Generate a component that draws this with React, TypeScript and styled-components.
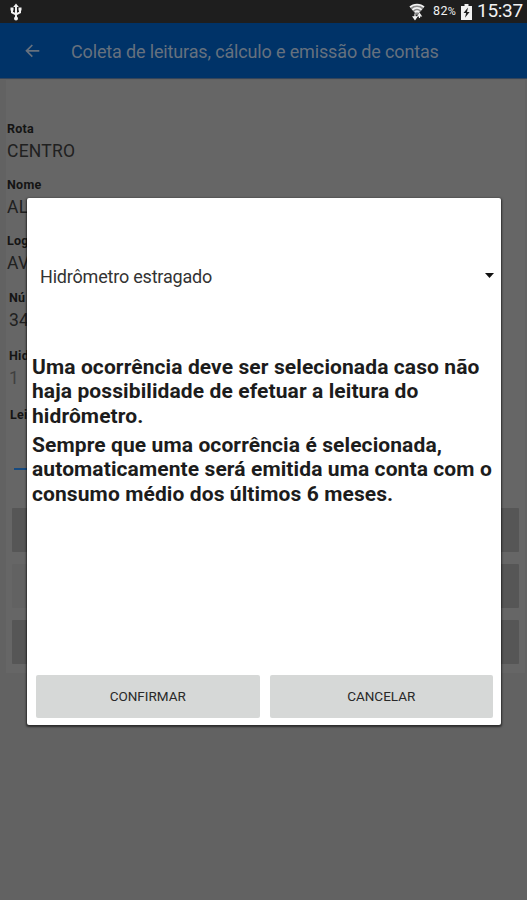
import React from "react";
import styled, { createGlobalStyle } from "styled-components";

const Global = createGlobalStyle`
  * { box-sizing: border-box; }
  body { margin: 0; background: #626262; font-family: Roboto, sans-serif; overflow: hidden; }
  button { font-family: inherit; }
`;

const Screen = styled.div`
  position: relative;
  width: 527px;
  height: 900px;
  display: flex;
  flex-direction: column;
  background: #626262;
  overflow: hidden;
`;

const StatusBar = styled.header`
  flex: none;
  height: 23px;
  padding: 0 4px 0 9px;
  display: flex;
  align-items: center;
  justify-content: space-between;
  background: #1e1e1e;
  color: #f2f2f2;
  svg { display: block; }
`;

const StatusGroup = styled.div`
  display: flex;
  align-items: center;
`;

const BatteryLevel = styled.span`
  width: 28px;
  margin: 0 0 0 8px;
  font-size: 12.5px;
  line-height: 14px;
  letter-spacing: 0.35px;
  white-space: nowrap;
`;

const PercentSign = styled.span`
  font-size: 11px;
`;

const Clock = styled.span`
  width: 46px;
  margin-left: 5px;
  margin-top: -1px;
  font-size: 19px;
  line-height: 22px;
  letter-spacing: -0.3px;
  white-space: nowrap;
`;

const AppBar = styled.div`
  flex: none;
  height: 56px;
  padding-left: 24px;
  display: flex;
  align-items: center;
  background: #003368;
  border-bottom: 1px solid #33445a;
  color: #66717e;
`;

const Title = styled.h1`
  margin: 2px 0 0 30px;
  font-size: 18px;
  font-weight: 400;
  line-height: 24px;
  letter-spacing: -0.15px;
  white-space: nowrap;
`;

const Form = styled.main`
  height: 593px;
  margin: 1px 2px 0 6px;
  padding-top: 40px;
  display: flex;
  flex-direction: column;
  background: #666;
`;

const Field = styled.div<{ $height: number; $indent: number }>`
  flex: none;
  height: ${(p) => p.$height}px;
  padding-left: ${(p) => p.$indent}px;
`;

const Label = styled.div`
  height: 18px;
  font-size: 12.5px;
  font-weight: 700;
  line-height: 18px;
  letter-spacing: 0.25px;
  color: #141414;
`;

const Value = styled.div<{ $muted?: boolean }>`
  font-size: 17.5px;
  line-height: 27px;
  letter-spacing: 0.25px;
  color: ${(p) => (p.$muted ? "#404040" : "#202020")};
`;

const ReadingInput = styled.div`
  flex: none;
  width: 440px;
  height: 46px;
  margin-left: 8px;
  border-bottom: 2px solid #164a80;
`;

const FormActions = styled.div`
  display: flex;
  flex-direction: column;
  gap: 12px;
  margin: 38px 6px 0;
`;

const FormAction = styled.div<{ $split?: boolean }>`
  height: 44px;
  border-radius: 1px;
  background: ${(p) => (p.$split ? "linear-gradient(90deg, #626262 50%, #565656 50%)" : "#565656")};
`;

const Dialog = styled.section`
  position: absolute;
  left: 27px;
  top: 198px;
  width: 474px;
  height: 527px;
  padding: 65px 7px 7px 5px;
  display: flex;
  flex-direction: column;
  background: #fff;
  border-radius: 2px;
  box-shadow: 0 1px 2px 1px rgba(0, 0, 0, 0.55);
`;

const Select = styled.div`
  flex: none;
  height: 28px;
  margin-left: 8px;
  display: flex;
  align-items: center;
  justify-content: space-between;
  font-size: 18px;
  line-height: 28px;
  letter-spacing: -0.2px;
  color: #333;
  svg { margin-bottom: 4px; }
`;

const Message = styled.div`
  flex: 1;
  padding-top: 63.5px;
  font-size: 21px;
  font-weight: 700;
  line-height: 24.5px;
  letter-spacing: 0.1px;
  color: #1c1c1c;
  white-space: nowrap;
`;

const Paragraph = styled.p`
  margin: 0 0 4.5px;
`;

const DialogActions = styled.div`
  display: grid;
  grid-template-columns: 1fr 1fr;
  gap: 10px;
  padding: 0 1px 0 4px;
`;

const DialogButton = styled.button`
  height: 43px;
  padding: 0 0 2px;
  border: 0;
  border-radius: 2px;
  background: #d6d8d7;
  font-size: 13.5px;
  font-weight: 400;
  color: #292929;
`;

const fields = [
  { label: "Rota", value: "CENTRO", height: 56, indent: 1 },
  { label: "Nome", value: "AL", height: 56, indent: 1 },
  { label: "Log", value: "AV", height: 57, indent: 1 },
  { label: "Nú", value: "34", height: 58, indent: 3 },
  { label: "Hid", value: "1", height: 59, indent: 3, muted: true },
];

const UsbIcon = () => (
  <svg width="14" height="18" viewBox="0 0 14 18" fill="none" stroke="currentColor" strokeWidth="2">
    <path d="M7 3v13M3 6v3.5l4 2 4-2V6" />
    <path d="M7 0.5 9.8 4H4.2z" fill="currentColor" stroke="none" />
    <path d="M1.5 4.5h3v3h-3zM9.5 4.5h3v3h-3z" fill="currentColor" stroke="none" />
    <circle cx="7" cy="15.5" r="2" fill="currentColor" stroke="none" />
  </svg>
);

const WifiIcon = () => (
  <svg width="16" height="18" viewBox="0 0 16 18" fill="none" stroke="currentColor">
    <path d="M1 4.6C4.5.8 11.5.8 15 4.6L8 12.5z" fill="#8b8b8b" stroke="none" />
    <path d="M1 4.2C4.5.7 11.5.7 15 4.2M3.4 6.8c2.6-2.5 6.6-2.5 9.2 0M5.8 9.2c1.3-1.2 3.1-1.2 4.4 0" strokeWidth="1.8" />
    <path d="M6 10.5v4M4.2 13.8 6 16.4l1.8-2.6zM10.5 15v-3M8.9 13l1.6-2.4 1.6 2.4z" fill="currentColor" strokeWidth="1.2" />
  </svg>
);

const BatteryIcon = () => (
  <svg width="11" height="16" viewBox="0 0 11 16">
    <path d="M3.5 0h4v2H11v14H0V2h3.5z" fill="currentColor" />
    <path d="M7 3.5 2.5 9h2.6L4 13.8 8.6 8H6z" fill="#1e1e1e" />
  </svg>
);

const BackIcon = () => (
  <svg width="17" height="16" viewBox="0 0 17 16" fill="none" stroke="currentColor" strokeWidth="1.7">
    <path d="M15.3 7.8H2.8M8.3 2 2.5 7.8l5.8 5.8" />
  </svg>
);

export default function App() {
  return (
    <>
      <Global />
      <Screen>
        <StatusBar>
          <UsbIcon />
          <StatusGroup>
            <WifiIcon />
            <BatteryLevel>
              82<PercentSign>%</PercentSign>
            </BatteryLevel>
            <BatteryIcon />
            <Clock>15:37</Clock>
          </StatusGroup>
        </StatusBar>
        <AppBar>
          <BackIcon />
          <Title>Coleta de leituras, cálculo e emissão de contas</Title>
        </AppBar>
        <Form>
          {fields.map((f) => (
            <Field key={f.label} $height={f.height} $indent={f.indent}>
              <Label>{f.label}</Label>
              <Value $muted={f.muted}>{f.value}</Value>
            </Field>
          ))}
          <Field $height={18} $indent={4}>
            <Label>Lei</Label>
          </Field>
          <ReadingInput />
          <FormActions>
            <FormAction />
            <FormAction $split />
            <FormAction />
          </FormActions>
        </Form>
        <Dialog role="dialog">
          <Select>
            <span>Hidrômetro estragado</span>
            <svg width="9" height="5" viewBox="0 0 9 5">
              <path d="M0 0h9L4.5 5z" fill="#111" />
            </svg>
          </Select>
          <Message>
            <Paragraph>
              Uma ocorrência deve ser selecionada caso não
              <br />
              haja possibilidade de efetuar a leitura do
              <br />
              hidrômetro.
            </Paragraph>
            <Paragraph>
              Sempre que uma ocorrência é selecionada,
              <br />
              automaticamente será emitida uma conta com o
              <br />
              consumo médio dos últimos 6 meses.
            </Paragraph>
          </Message>
          <DialogActions>
            <DialogButton>CONFIRMAR</DialogButton>
            <DialogButton>CANCELAR</DialogButton>
          </DialogActions>
        </Dialog>
      </Screen>
    </>
  );
}
